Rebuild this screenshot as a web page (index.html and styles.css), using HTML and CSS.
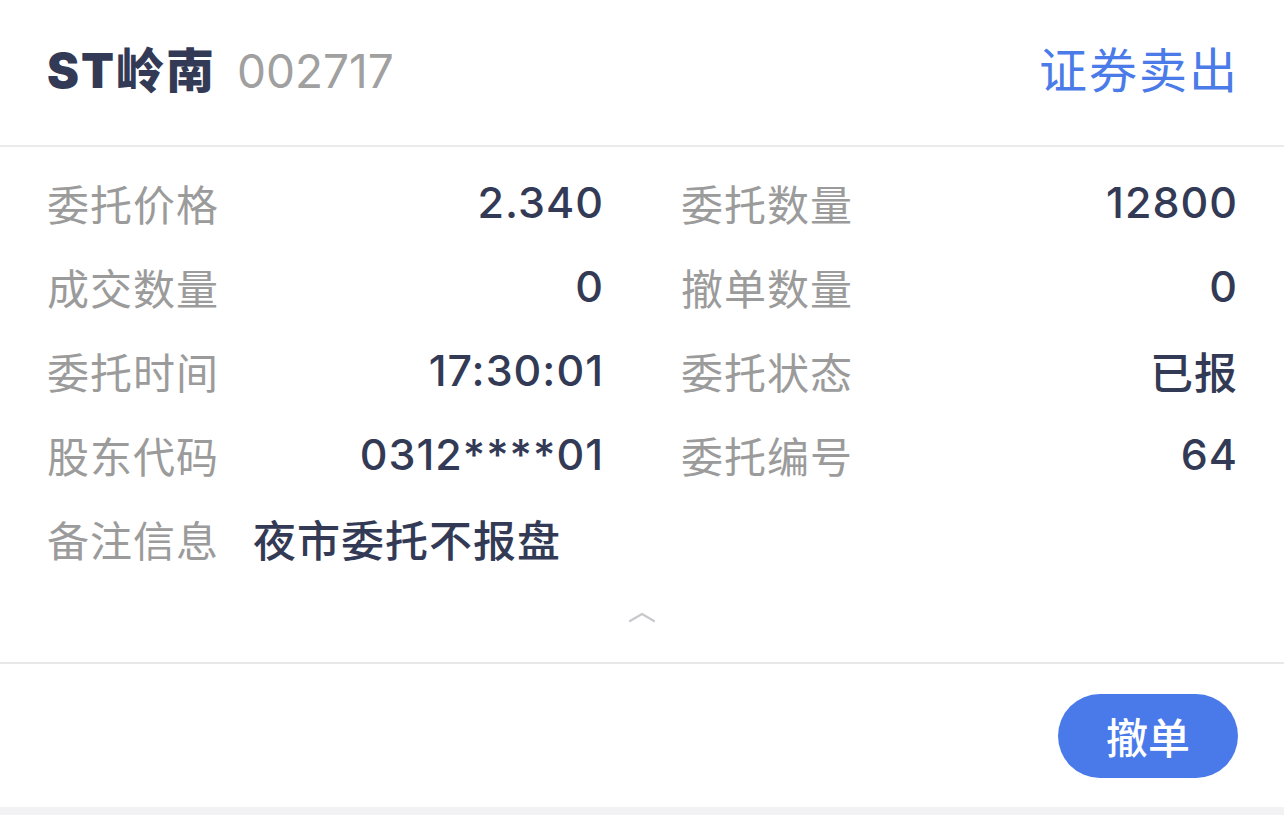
FILE: index.html
```html
<!DOCTYPE html>
<html lang="zh-CN">
<head>
    <meta charset="UTF-8">
    <meta name="viewport" content="width=device-width, initial-scale=1.0">
    <title>委托详情</title>
    <link rel="stylesheet" href="styles.css">
</head>
<body>
    <div class="card">
        <div class="card-header">
            <div class="stock">
                <span class="stock-name">ST岭南</span>
                <span class="stock-code">002717</span>
            </div>
            <span class="trade-type">证券卖出</span>
        </div>

        <div class="details">
            <div class="item"><span class="label">委托价格</span><span class="value">2.340</span></div>
            <div class="item"><span class="label">委托数量</span><span class="value">12800</span></div>
            <div class="item"><span class="label">成交数量</span><span class="value">0</span></div>
            <div class="item"><span class="label">撤单数量</span><span class="value">0</span></div>
            <div class="item"><span class="label">委托时间</span><span class="value">17:30:01</span></div>
            <div class="item"><span class="label">委托状态</span><span class="value">已报</span></div>
            <div class="item"><span class="label">股东代码</span><span class="value">0312****01</span></div>
            <div class="item"><span class="label">委托编号</span><span class="value">64</span></div>
            <div class="item remark"><span class="label">备注信息</span><span class="value">夜市委托不报盘</span></div>
        </div>

        <div class="toggle">
            <svg width="28" height="12" viewBox="0 0 28 12">
                <polyline points="2,10 14,3 26,10" fill="none" stroke="#c8c8cd" stroke-width="2.2" stroke-linecap="round" stroke-linejoin="round"/>
            </svg>
        </div>

        <div class="card-footer">
            <button class="cancel-btn">撤单</button>
        </div>
    </div>
    <div class="bottom-gap"></div>
</body>
</html>
```

FILE: styles.css
```css
body {
    font-family: "Inter", "Noto Sans CJK SC", sans-serif;
    background-color: #fff;
    margin: 0;
    padding: 0;
    color: #333a55;
}
.card {
    background-color: #fff;
}
.card-header {
    height: 133px;
    padding: 0 45px 12px 47px;
    display: flex;
    align-items: center;
    justify-content: space-between;
    border-bottom: 2px solid #ebebeb;
}
.stock {
    display: flex;
    align-items: baseline;
    gap: 21px;
}
.stock-name {
    font-size: 48px;
    font-weight: 900;
    letter-spacing: 2px;
    color: #333a55;
}
.stock-code {
    font-size: 46px;
    color: #a0a0a0;
}
.trade-type {
    font-size: 48px;
    color: #4a7be8;
    letter-spacing: 2px;
}
.details {
    display: grid;
    grid-template-columns: 556px 556px;
    column-gap: 78px;
    grid-auto-rows: 84px;
    padding: 13px 47px 0;
}
.item {
    display: flex;
    align-items: center;
    justify-content: space-between;
}
.label {
    color: #9b9b9b;
    font-size: 42px;
    letter-spacing: 1px;
}
.value {
    color: #333a55;
    font-size: 43px;
    font-weight: 500;
    letter-spacing: 1px;
    margin-right: -1px;
}
.remark {
    grid-column: 1 / 3;
    justify-content: flex-start;
    gap: 34px;
}
.toggle {
    height: 82px;
    display: flex;
    align-items: center;
    justify-content: center;
}
.toggle svg {
    margin-top: -8px;
}
.card-footer {
    border-top: 2px solid #e8e8e8;
    height: 143px;
    display: flex;
    align-items: center;
    justify-content: flex-end;
    padding: 0 46px;
}
.cancel-btn {
    background-color: #4a7aea;
    color: #fff;
    border: none;
    border-radius: 42px;
    width: 180px;
    height: 84px;
    font-family: "Noto Sans CJK SC", sans-serif;
    font-size: 42px;
    font-weight: 500;
    cursor: pointer;
}
.bottom-gap {
    height: 20px;
    background-color: #f2f2f4;
}
```
